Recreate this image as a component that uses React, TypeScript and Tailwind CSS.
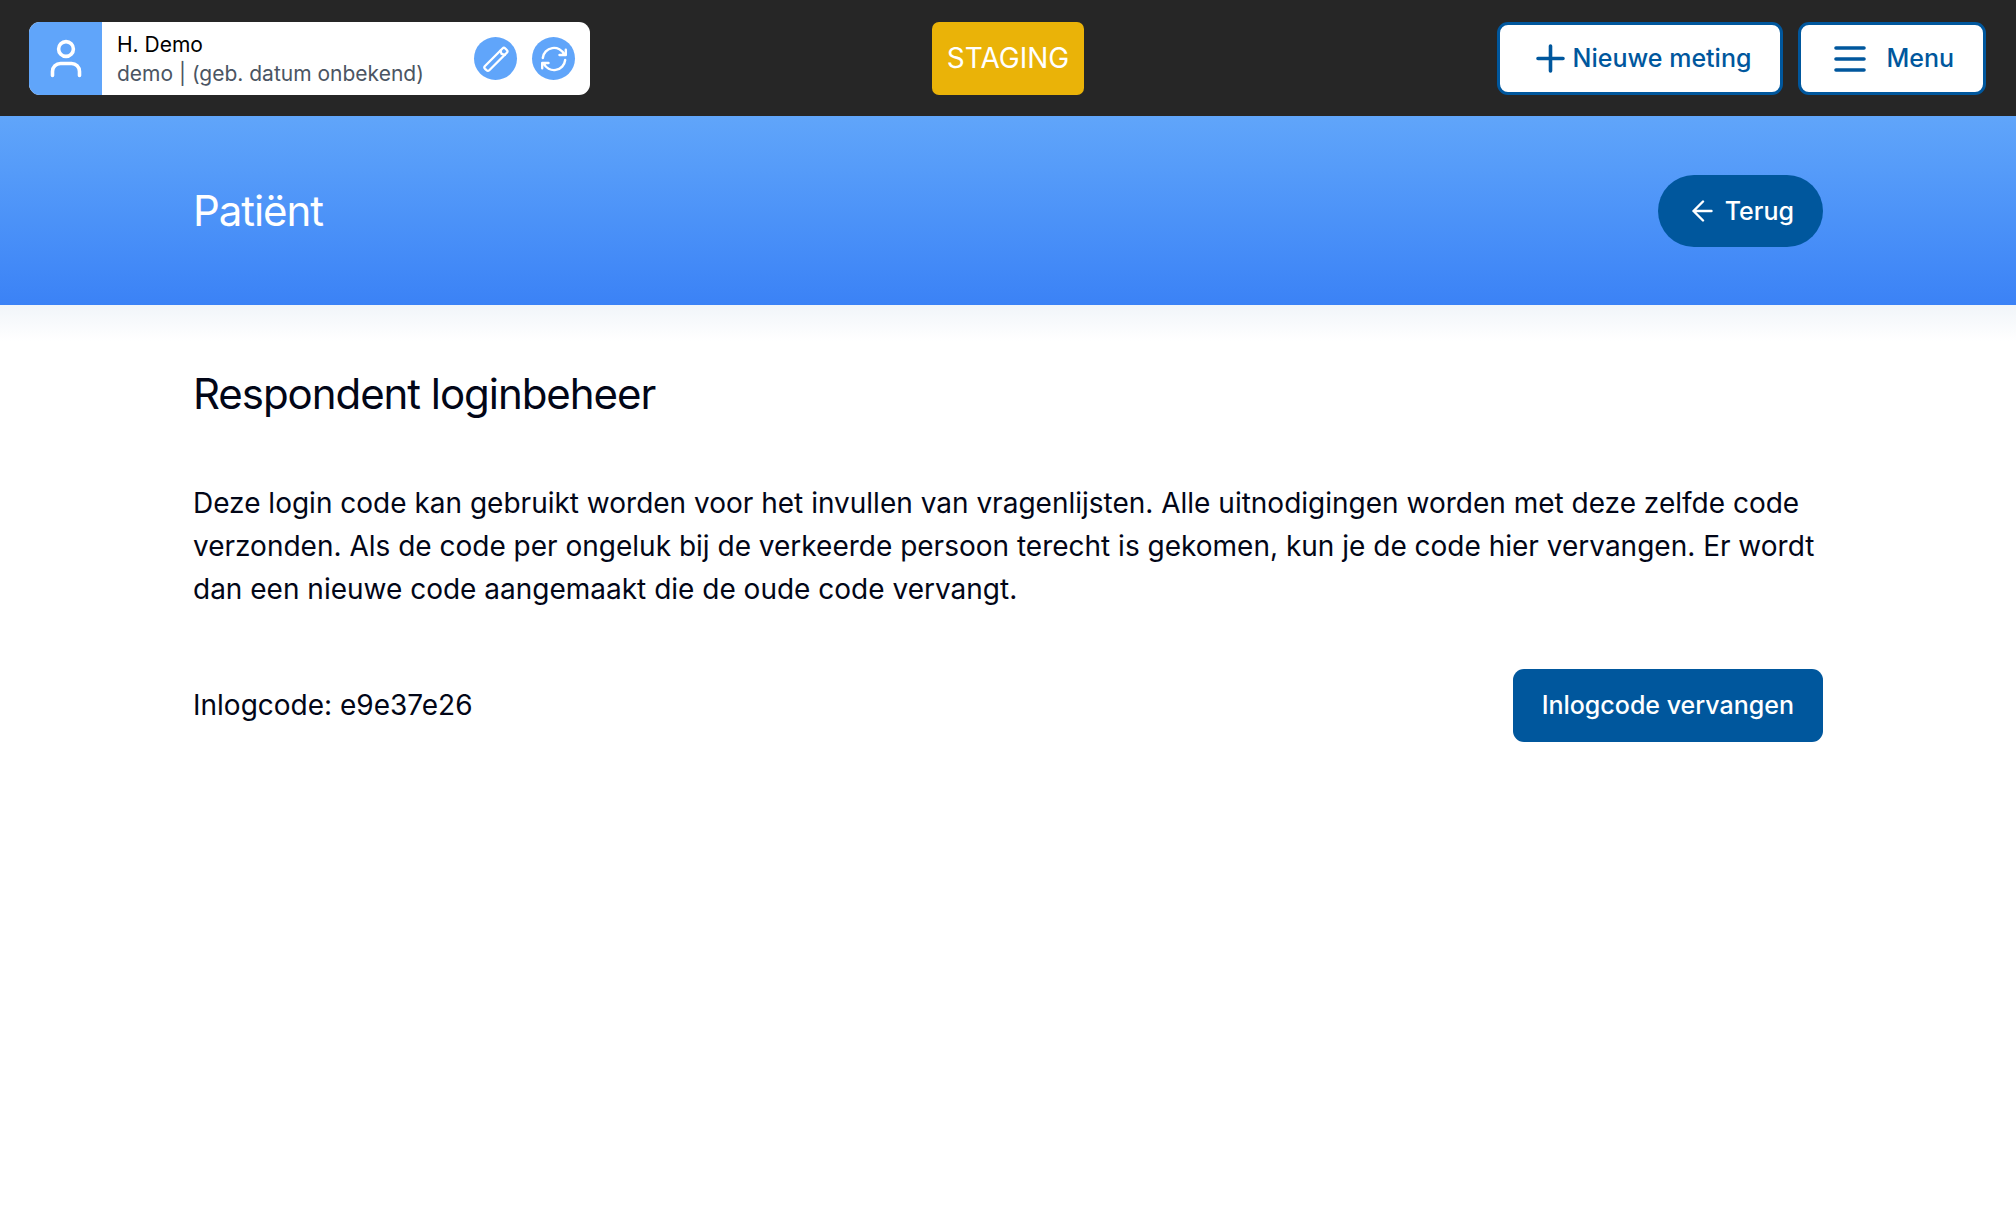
import React from "react";

function UserIcon() {
  return (
    <svg viewBox="0 0 44 44" className="size-11" fill="none" stroke="currentColor" strokeWidth="3.6" strokeLinecap="round" strokeLinejoin="round" aria-hidden="true">
      <path d="M8.500 38.500V34.500a8 8 0 0 1 8-8h11a8 8 0 0 1 8 8v4" />
      <circle cx="22" cy="12" r="7.4" />
    </svg>
  );
}

function PencilIcon() {
  return (
    <svg viewBox="0 0 28 28" className="size-7" fill="none" stroke="currentColor" strokeWidth="2.3" strokeLinecap="round" strokeLinejoin="round" aria-hidden="true">
      <path d="M3 21 20.500 3.500a2 2 0 0 1 2.800 0l1.500 1.500a2 2 0 0 1 0 2.800L7.300 25.200a2 2 0 0 1-2.800 0L3 23.800a2 2 0 0 1 0-2.800Z" />
      <path d="m18.500 5.500 1 3.300 3.300 1" />
    </svg>
  );
}

function RefreshIcon() {
  return (
    <svg viewBox="0 0 28 28" className="size-7" fill="none" stroke="currentColor" strokeWidth="2.4" strokeLinecap="round" strokeLinejoin="round" aria-hidden="true">
      <path d="M2.800 13a11.300 11.300 0 0 1 21.500-3.500M25.800 4.800V10h-6.300M25.200 15a11.300 11.300 0 0 1-21.500 3.500M2.200 23.200V18h6.300" />
    </svg>
  );
}

export default function App() {
  return (
    <div className="min-h-screen bg-white font-['Inter',sans-serif] text-[28px] leading-[43px] text-[#020617]">
      <header className="grid grid-cols-[1fr_auto_1fr] items-center bg-[#262626] px-[29px] pt-[22px] pb-[21px]">
        <div className="flex h-[73px] w-[561px] overflow-hidden rounded-[11px] bg-white">
          <div className="flex w-[73px] items-center justify-center bg-[#60a5fa] text-white">
            <UserIcon />
          </div>
          <div className="flex flex-1 items-center justify-between px-[15px]">
            <div className="text-[21px] leading-[29px]">
              <p className="text-black">H. Demo</p>
              <p className="text-[#4b5563]">demo | (geb. datum onbekend)</p>
            </div>
            <div className="flex gap-[15px] text-white">
              <button type="button" aria-label="Bewerken" className="flex size-[43px] items-center justify-center rounded-full bg-[#60a5fa]">
                <PencilIcon />
              </button>
              <button type="button" aria-label="Wisselen" className="flex size-[43px] items-center justify-center rounded-full bg-[#60a5fa]">
                <RefreshIcon />
              </button>
            </div>
          </div>
        </div>
        <div className="flex h-[73px] items-center rounded-[7px] bg-[#eab308] px-[15px] text-white">STAGING</div>
        <div className="flex justify-end gap-[15px] pr-px text-[25px] font-medium text-[#00579d]">
          <button type="button" className="flex h-[73px] items-center gap-2 rounded-[11px] border-3 border-[#00579d] bg-white pr-[29px] pl-9">
            <svg viewBox="0 0 29 29" className="size-[29px]" fill="none" stroke="currentColor" strokeWidth="3.6" strokeLinecap="round" aria-hidden="true">
              <path d="M14.500 2v25M2 14.500h25" />
            </svg>
            Nieuwe meting
          </button>
          <button type="button" className="flex h-[73px] items-center gap-5 rounded-[11px] border-3 border-[#00579d] bg-white pr-[29px] pl-[33px]">
            <svg viewBox="0 0 32 28" className="h-7 w-8" fill="none" stroke="currentColor" strokeWidth="3.6" strokeLinecap="round" aria-hidden="true">
              <path d="M2 3h28M2 14h28M2 25h28" />
            </svg>
            Menu
          </button>
        </div>
      </header>

      <div className="bg-linear-to-b from-[#60a5fa] to-[#3b82f6] px-[193px] pt-[59px] pb-[58px] text-white">
        <div className="flex items-center justify-between">
          <h1 className="text-[42px] leading-[72px] tracking-tight">Patiënt</h1>
          <button type="button" className="flex h-[72px] items-center gap-3 rounded-full bg-[#00579d] pr-[29px] pl-[33px] text-[25px] font-medium">
            <svg viewBox="0 0 22 22" className="size-[22px]" fill="none" stroke="currentColor" strokeWidth="2.4" strokeLinecap="round" strokeLinejoin="round" aria-hidden="true">
              <path d="M12 1.500 2.500 11l9.500 9.500M2.500 11h18" />
            </svg>
            Terug
          </button>
        </div>
      </div>
      <div className="h-9 bg-linear-to-b from-[#f1f5f9] to-white" />

      <main className="px-[193px] pt-[27px]">
        <h2 className="text-[42px] leading-[52px] tracking-tight">Respondent loginbeheer</h2>
        <p className="mt-[62px]">
          Deze login code kan gebruikt worden voor het invullen van vragenlijsten. Alle uitnodigingen worden met deze zelfde code verzonden. Als de code per ongeluk bij de verkeerde persoon terecht is gekomen, kun je de code hier vervangen. Er wordt dan een nieuwe code aangemaakt die de oude code vervangt.
        </p>
        <div className="mt-[58px] flex items-center justify-between">
          <p>Inlogcode: e9e37e26</p>
          <button type="button" className="h-[73px] rounded-[11px] bg-[#00579d] px-[29px] text-[25px] font-medium text-white">
            Inlogcode vervangen
          </button>
        </div>
      </main>
    </div>
  );
}
